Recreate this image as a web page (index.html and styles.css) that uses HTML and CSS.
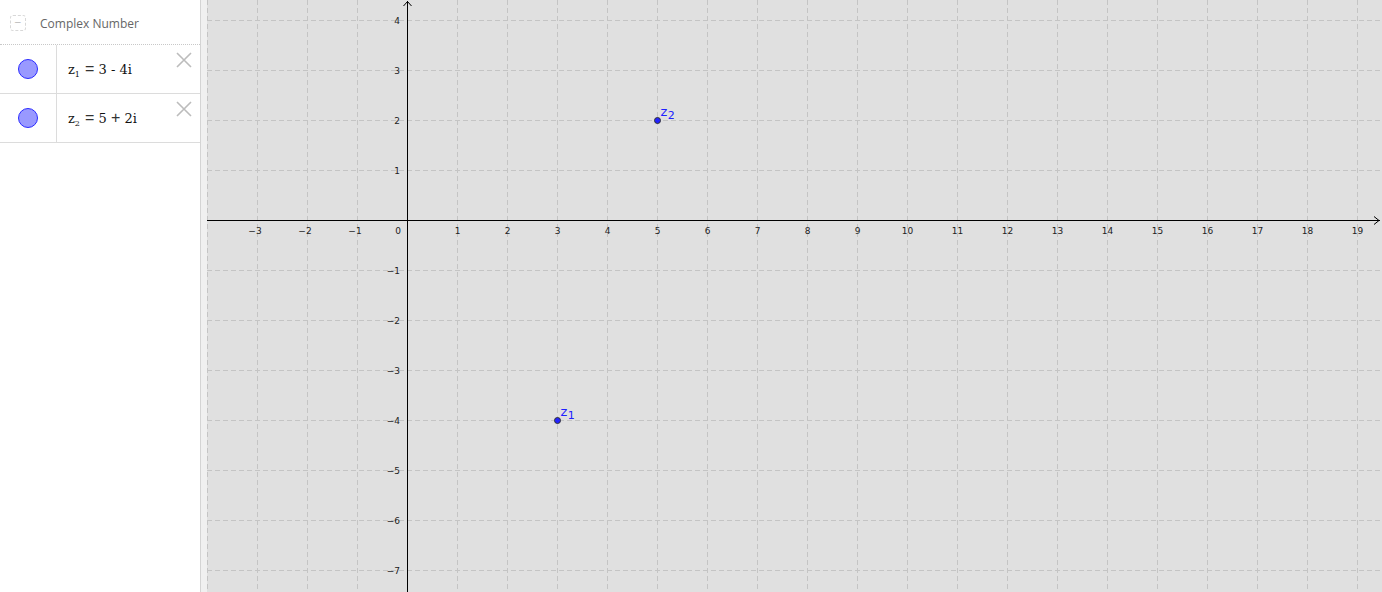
FILE: index.html
```html
<!DOCTYPE html>
<html>
<head>
<meta charset="utf-8">
<link rel="stylesheet" href="styles.css">
</head>
<body>
<div class="app">
  <div class="panel">
    <div class="header">
      <span class="toggle">&minus;</span>
      <span class="title">Complex Number</span>
    </div>
    <div class="row">
      <div class="marker"><span class="dot"></span></div>
      <div class="formula"><span class="expr">z<sub>1</sub> <span class="op">=</span> 3 - 4i</span></div>
      <svg class="close" width="16" height="16" viewBox="0 0 16 16"><path d="M1 1L15 15M15 1L1 15" stroke="#bcbcbc" stroke-width="1.6" fill="none"/></svg>
    </div>
    <div class="row">
      <div class="marker"><span class="dot"></span></div>
      <div class="formula"><span class="expr">z<sub>2</sub> <span class="op">=</span> 5 <span class="op">+</span> 2i</span></div>
      <svg class="close" width="16" height="16" viewBox="0 0 16 16"><path d="M1 1L15 15M15 1L1 15" stroke="#bcbcbc" stroke-width="1.6" fill="none"/></svg>
    </div>
  </div>
  <div class="splitter"></div>
  <div class="graph">
    <svg id="plot" width="1175" height="592" viewBox="0 0 1175 592" shape-rendering="crispEdges"></svg>
  </div>
</div>
<script src="app.js"></script>
</body>
</html>
```
FILE: styles.css
```css
* { box-sizing: border-box; }
html, body { margin: 0; padding: 0; }
body { width: 1382px; height: 592px; overflow: hidden; font-family: "Open Sans", "Noto Sans", sans-serif; background: #fff; }
.app { display: flex; height: 592px; }
.panel { width: 201px; flex: none; border-right: 1px solid #d4d4d4; background: #fff; display: flex; flex-direction: column; }
.header { height: 45px; display: flex; align-items: center; padding-left: 10px; padding-top: 2px; border-bottom: 1px dotted #c8c8c8; }
.toggle { width: 16px; height: 16px; border: 1px dashed #d8d8d8; border-radius: 3px; display: flex; align-items: center; justify-content: center; color: #bbb; font-size: 12px; line-height: 1; margin-right: 14px; }
.title { color: #666; font-size: 12px; }
.row { height: 49px; display: flex; position: relative; border-bottom: 1px solid #dcdcdc; }
.marker { width: 57px; border-right: 1px solid #dcdcdc; display: flex; align-items: center; justify-content: center; }
.dot { width: 20px; height: 20px; border-radius: 50%; background: #9999ff; border: 1.3px solid #2b2bff; }
.formula { padding-left: 11px; display: flex; align-items: center; }
.expr { display: block; font-family: "DejaVu Serif", "Liberation Serif", serif; font-size: 13px; line-height: 18px; color: #111; white-space: pre; }
.expr sub { font-size: 8px; vertical-align: -3px; line-height: 0; margin-right: 1px; }
.op { font-family: "Liberation Sans", sans-serif; font-size: 16px; color: #333; }
.close { position: absolute; right: 8px; top: 7px; }
.splitter { width: 6px; flex: none; background: #f0f0f0; }
.graph { flex: 1; background: #e0e0e0; }
#plot { display: block; }
#plot text { font-family: "DejaVu Sans", sans-serif; font-size: 9px; fill: #222; }
#plot text.pl { font-family: "DejaVu Sans", sans-serif; font-size: 13px; fill: #2020ff; }
#plot text.pl tspan.s { font-size: 11px; }
```
FILE: app.js
```js
(function(){
  var svg = document.getElementById('plot');
  var NS = 'http://www.w3.org/2000/svg';
  var ox = 200, oy = 220, u = 50, W = 1175, H = 592;
  function el(t, a, txt){ var e = document.createElementNS(NS, t); for (var k in a) e.setAttribute(k, a[k]); if (txt !== undefined) e.textContent = txt; svg.appendChild(e); return e; }
  var k;
  for (k = -4; k <= 19; k++) {
    var x = ox + k*u;
    if (k === 0 || x < 0 || x > W) continue;
    el('line', {x1: x+0.5, y1: 0, x2: x+0.5, y2: H, stroke: '#c4c4c4', 'stroke-dasharray': '5,3'});
  }
  for (k = -8; k <= 5; k++) {
    var y = oy - k*u;
    if (k === 0 || y < 0 || y > H) continue;
    el('line', {x1: 0, y1: y+0.5, x2: W, y2: y+0.5, stroke: '#c4c4c4', 'stroke-dasharray': '5,3'});
  }
  el('line', {x1: 0, y1: oy+0.5, x2: W-2, y2: oy+0.5, stroke: '#000'});
  el('line', {x1: ox+0.5, y1: 1, x2: ox+0.5, y2: H, stroke: '#000'});
  el('path', {d: 'M' + (W-8) + ' ' + (oy-3.5) + ' L' + (W-3) + ' ' + (oy+0.5) + ' L' + (W-8) + ' ' + (oy+4.5), stroke: '#000', fill: 'none', 'shape-rendering': 'auto'});
  el('path', {d: 'M' + (ox-3.5) + ' 6 L' + (ox+0.5) + ' 1.5 L' + (ox+4.5) + ' 6', stroke: '#000', fill: 'none', 'shape-rendering': 'auto'});
  function lbl(n){ return n < 0 ? '\u2212' + (-n) : String(n); }
  for (k = -3; k <= 19; k++) {
    if (k === 0) continue;
    el('text', {x: ox + k*u + (k<0 ? -2 : 0.5), y: oy + 13.5, 'text-anchor': 'middle'}, lbl(k));
  }
  el('text', {x: ox - 6, y: oy + 13.5, 'text-anchor': 'end'}, '0');
  for (k = -7; k <= 4; k++) {
    if (k === 0) continue;
    el('text', {x: ox - 7, y: oy - k*u + 3.5, 'text-anchor': 'end'}, lbl(k));
  }
  function pt(px, py, sub){
    var cx = ox + px*u + 0.5, cy = oy - py*u + 0.5;
    el('circle', {cx: cx, cy: cy, r: 3, fill: '#2323ff', stroke: '#333', 'stroke-width': 1, 'shape-rendering': 'auto'});
    var t = el('text', {x: cx + 3, y: cy - 5, 'class': 'pl'});
    var a = document.createElementNS(NS, 'tspan'); a.textContent = 'z'; t.appendChild(a);
    var b = document.createElementNS(NS, 'tspan'); b.setAttribute('class', 's'); b.setAttribute('dy', '3'); b.setAttribute('dx', '0.5'); b.textContent = sub; t.appendChild(b);
  }
  pt(5, 2, '2');
  pt(3, -4, '1');
})();
```
